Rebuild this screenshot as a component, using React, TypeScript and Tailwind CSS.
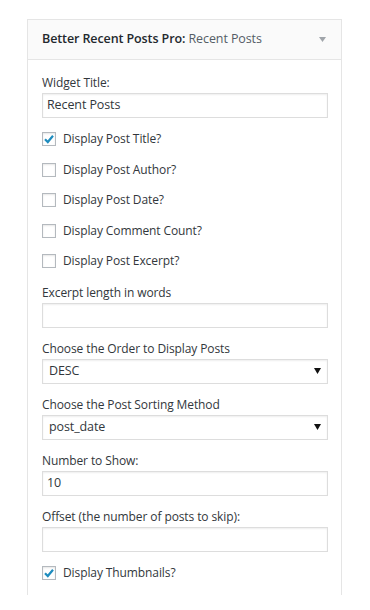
const font = { fontFamily: '"Open Sans", "Noto Sans", sans-serif' };

const checks = [
  { label: "Display Post Title?", on: true },
  { label: "Display Post Author?", on: false },
  { label: "Display Post Date?", on: false },
  { label: "Display Comment Count?", on: false },
  { label: "Display Post Excerpt?", on: false },
];

const Check = ({ label, on }: { label: string; on: boolean }) => (
  <div className="flex h-[30.5px] items-center">
    <span className="flex h-[14px] w-[14px] items-center justify-center border border-[#b4b9be] bg-white shadow-[inset_0_1px_2px_rgba(0,0,0,0.1)]">
      {on && (
        <svg width="12" height="12" viewBox="0 0 12 12">
          <path d="M2 6.2 L4.8 9 L10 2.8" fill="none" stroke="#1e8cbe" strokeWidth="2.2" strokeLinejoin="miter" />
        </svg>
      )}
    </span>
    <span className="ml-[7px]">{label}</span>
  </div>
);

const Field = ({ label, value = "", select = false, top = "mt-[11px]" }: { label: string; value?: string; select?: boolean; top?: string }) => (
  <div className={top}>
    <div className="h-[20px] leading-[20px]">{label}</div>
    <div className={`flex h-[25px] items-center justify-between border border-[#dddddd] bg-white text-[12.5px] shadow-[inset_0_1px_2px_rgba(0,0,0,0.07)] ${select ? "pl-[6px] pr-[6px]" : "pl-[4px]"}`}>
      <span>{value}</span>
      {select && (
        <svg width="7" height="6" viewBox="0 0 7 6">
          <path d="M0 0 H7 L3.5 6 Z" fill="#111" />
        </svg>
      )}
    </div>
  </div>
);

export default function App() {
  return (
    <div className="min-h-[610px] bg-white pt-[19px] text-[12px] tracking-[-0.1px] text-[#32373c]" style={font}>
      <div className="ml-[27px] h-[576px] w-[315px] overflow-hidden border border-b-0 border-[#e5e5e5] bg-white">
        <div className="flex h-[40px] items-center justify-between border-b border-[#e5e5e5] bg-[#fafafa] pl-[14px] pr-[15px]">
          <span className="text-[12.5px] text-[#23282d]">
            <span className="font-semibold">Better Recent Posts Pro:</span>{" "}
            <span className="text-[#555d66]">Recent Posts</span>
          </span>
          <svg width="7" height="5" viewBox="0 0 7 5">
            <path d="M0 0 H7 L3.5 5 Z" fill="#a0a5aa" />
          </svg>
        </div>
        <div className="pl-[14px] pr-[13px] pt-[13px]">
          <Field label="Widget Title:" value="Recent Posts" top="" />
          <div className="mt-[6px]">
            {checks.map((c) => (
              <Check key={c.label} label={c.label} on={c.on} />
            ))}
          </div>
          <Field label="Excerpt length in words" top="mt-[6px]" />
          <Field label="Choose the Order to Display Posts" value="DESC" select />
          <Field label="Choose the Post Sorting Method" value="post_date" select />
          <Field label="Number to Show:" value="10" />
          <Field label="Offset (the number of posts to skip):" />
          <div className="mt-[6px]">
            <Check label="Display Thumbnails?" on />
          </div>
        </div>
      </div>
    </div>
  );
}
